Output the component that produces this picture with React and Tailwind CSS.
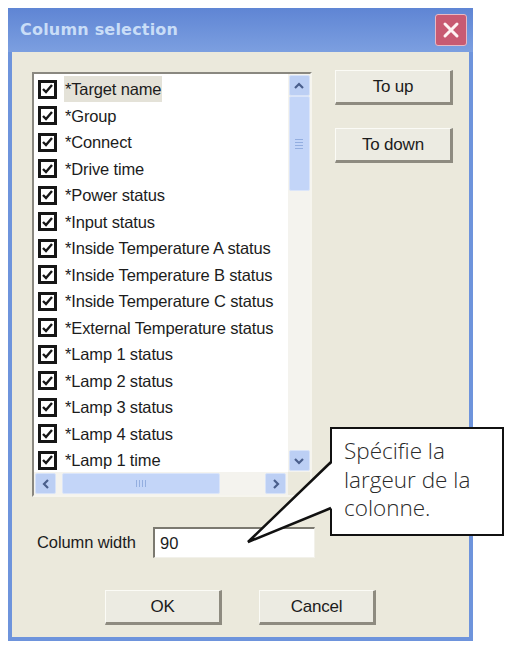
import React from "react";

const items = [
  "*Target name",
  "*Group",
  "*Connect",
  "*Drive time",
  "*Power status",
  "*Input status",
  "*Inside Temperature A status",
  "*Inside Temperature B status",
  "*Inside Temperature C status",
  "*External Temperature status",
  "*Lamp 1 status",
  "*Lamp 2 status",
  "*Lamp 3 status",
  "*Lamp 4 status",
  "*Lamp 1 time",
];

const font = { fontFamily: '"Liberation Sans", Arial, sans-serif' };

function Check() {
  return (
    <div className="w-[19px] h-[19px] border-[3px] border-[#161616] bg-white flex items-center justify-center shrink-0">
      <svg width="11" height="10" viewBox="0 0 11 10">
        <path d="M1 5 L4 8 L10 1" fill="none" stroke="#161616" strokeWidth="2.4" />
      </svg>
    </div>
  );
}

function Arrow({ dir }) {
  const d = {
    up: "M4 10 L8 6 L12 10",
    down: "M4 6 L8 10 L12 6",
    left: "M10 4 L6 8 L10 12",
    right: "M6 4 L10 8 L6 12",
  }[dir];
  return (
    <div className="w-[21px] h-[21px] bg-[#bccff4] rounded-[2px] border border-[#d8e3f8] flex items-center justify-center shrink-0">
      <svg width="16" height="16" viewBox="0 0 16 16">
        <path d={d} fill="none" stroke="#4a5f8c" strokeWidth="2.2" />
      </svg>
    </div>
  );
}

function Btn({ children, w }) {
  return (
    <div
      className={`${w} h-[35px] bg-[#ecebe2] border-t border-l border-t-[#fbfbf6] border-l-[#fbfbf6] border-b-[3px] border-r-[3px] border-b-[#8e8b80] border-r-[#8e8b80] flex items-center justify-center text-[17px] text-[#1c1c1c] tracking-[-0.2px]`}
    >
      {children}
    </div>
  );
}

export default function App() {
  return (
    <div className="w-[512px] h-[646px] bg-white relative overflow-hidden" style={font}>
      <div className="ml-[8px] mt-[8px] w-[465px] h-[633px] flex flex-col bg-[#6e94dc] px-[4px] pb-[4px]">
        {/* title bar */}
        <div className="h-[44px] flex items-center justify-between bg-gradient-to-b from-[#5f85d4] to-[#7c9fe0] -mx-[4px] px-[12px]">
          <div className="font-bold text-[#c9ddf7] tracking-[0.2px]" style={{ fontFamily: '"DejaVu Sans", sans-serif', fontSize: 16 }}>
            Column selection
          </div>
          <div className="w-[32px] h-[32px] rounded-[3px] bg-[#c85a72] border border-[#e7b9c4] flex items-center justify-center -mr-[6px]">
            <svg width="20" height="20" viewBox="0 0 20 20">
              <path d="M4 4 L16 16 M16 4 L4 16" stroke="#fff4f4" strokeWidth="3" strokeLinecap="round" />
            </svg>
          </div>
        </div>
        {/* body */}
        <div className="flex-1 bg-[#ebe9dc] flex flex-col pl-[20px] pt-[20px]">
          <div className="flex">
            {/* listbox */}
            <div className="w-[280px] h-[425px] border-2 border-t-[#8a8880] border-l-[#8a8880] border-b-[#f6f5ee] border-r-[#f6f5ee] bg-white flex flex-col">
              <div className="flex flex-1 min-h-0">
                <div className="flex-1 flex flex-col pt-[2px] pl-[4px] overflow-hidden">
                  {items.map((t, i) => (
                    <div key={i} className="h-[26.5px] flex items-center gap-[7px] shrink-0">
                      <Check />
                      <span
                        className={`text-[16.5px] leading-[26px] text-[#1c1c1c] tracking-[-0.15px] whitespace-nowrap px-[1px] ${i === 0 ? "bg-[#e4e2d8]" : ""}`}
                      >
                        {t}
                      </span>
                    </div>
                  ))}
                </div>
                {/* vertical scrollbar */}
                <div className="w-[22px] bg-[#f4f3ee] flex flex-col items-center pt-[1px] pb-[1px]">
                  <Arrow dir="up" />
                  <div className="w-[21px] h-[95px] bg-[#c3d5f8] rounded-[2px] border border-[#dbe5f9] flex flex-col items-center justify-center gap-[2px]">
                    <div className="w-[8px] h-[1px] bg-[#93aee0]" />
                    <div className="w-[8px] h-[1px] bg-[#93aee0]" />
                    <div className="w-[8px] h-[1px] bg-[#93aee0]" />
                    <div className="w-[8px] h-[1px] bg-[#93aee0]" />
                  </div>
                  <div className="flex-1" />
                  <Arrow dir="down" />
                </div>
              </div>
              {/* horizontal scrollbar */}
              <div className="h-[23px] flex items-center">
                <div className="flex-1 h-[23px] bg-[#f4f3ee] flex items-center pl-[1px] pr-[2px]">
                  <Arrow dir="left" />
                  <div className="w-[158px] h-[21px] ml-[6px] bg-[#c3d5f8] rounded-[2px] border border-[#dbe5f9] flex items-center justify-center gap-[2px]">
                    <div className="w-[1px] h-[7px] bg-[#93aee0]" />
                    <div className="w-[1px] h-[7px] bg-[#93aee0]" />
                    <div className="w-[1px] h-[7px] bg-[#93aee0]" />
                    <div className="w-[1px] h-[7px] bg-[#93aee0]" />
                  </div>
                  <div className="flex-1" />
                  <Arrow dir="right" />
                </div>
                <div className="w-[22px] h-[23px] bg-[#ebe9dc]" />
              </div>
            </div>
            {/* side buttons */}
            <div className="flex flex-col gap-[23px] ml-[23px] -mt-[2px]">
              <Btn w="w-[118px]">To up</Btn>
              <Btn w="w-[118px]">To down</Btn>
            </div>
          </div>
          {/* column width */}
          <div className="flex items-center mt-[30px] pl-[5px]">
            <span className="text-[16.5px] text-[#1c1c1c] tracking-[-0.1px] w-[116px]">Column width</span>
            <div className="w-[162px] h-[31px] bg-white border-t-2 border-l-2 border-t-[#7b7970] border-l-[#7b7970] border-b border-r border-b-[#f2f1ea] border-r-[#f2f1ea] flex items-center pl-[5px] text-[16.5px] text-[#1c1c1c]">
              90
            </div>
          </div>
          {/* OK/Cancel */}
          <div className="flex mt-[32px] pl-[73px] gap-[37px]">
            <Btn w="w-[117px]">OK</Btn>
            <Btn w="w-[117px]">Cancel</Btn>
          </div>
        </div>
      </div>

      {/* callout overlay */}
      <div
        className="absolute left-[330px] top-[427px] w-[174px] h-[109px] bg-white border-2 border-[#111] pl-[12px] pt-[8px] text-[22.5px] text-[#2a2a2a] flex flex-col"
        style={{ fontFamily: '"Open Sans", "Noto Sans", sans-serif', fontWeight: 300 }}
      >
        <div className="h-[28.5px] leading-[28.5px] whitespace-nowrap">Spécifie la</div>
        <div className="h-[28.5px] leading-[28.5px] whitespace-nowrap">largeur de la</div>
        <div className="h-[28.5px] leading-[28.5px] whitespace-nowrap">colonne.</div>
      </div>
      <svg className="absolute left-0 top-0" width="512" height="646" viewBox="0 0 512 646">
        <polygon points="333,462 248,542 333,508" fill="white" />
        <polyline points="331,462 248,542 331,508" fill="none" stroke="#111" strokeWidth="2.5" strokeLinejoin="miter" />
      </svg>
    </div>
  );
}
